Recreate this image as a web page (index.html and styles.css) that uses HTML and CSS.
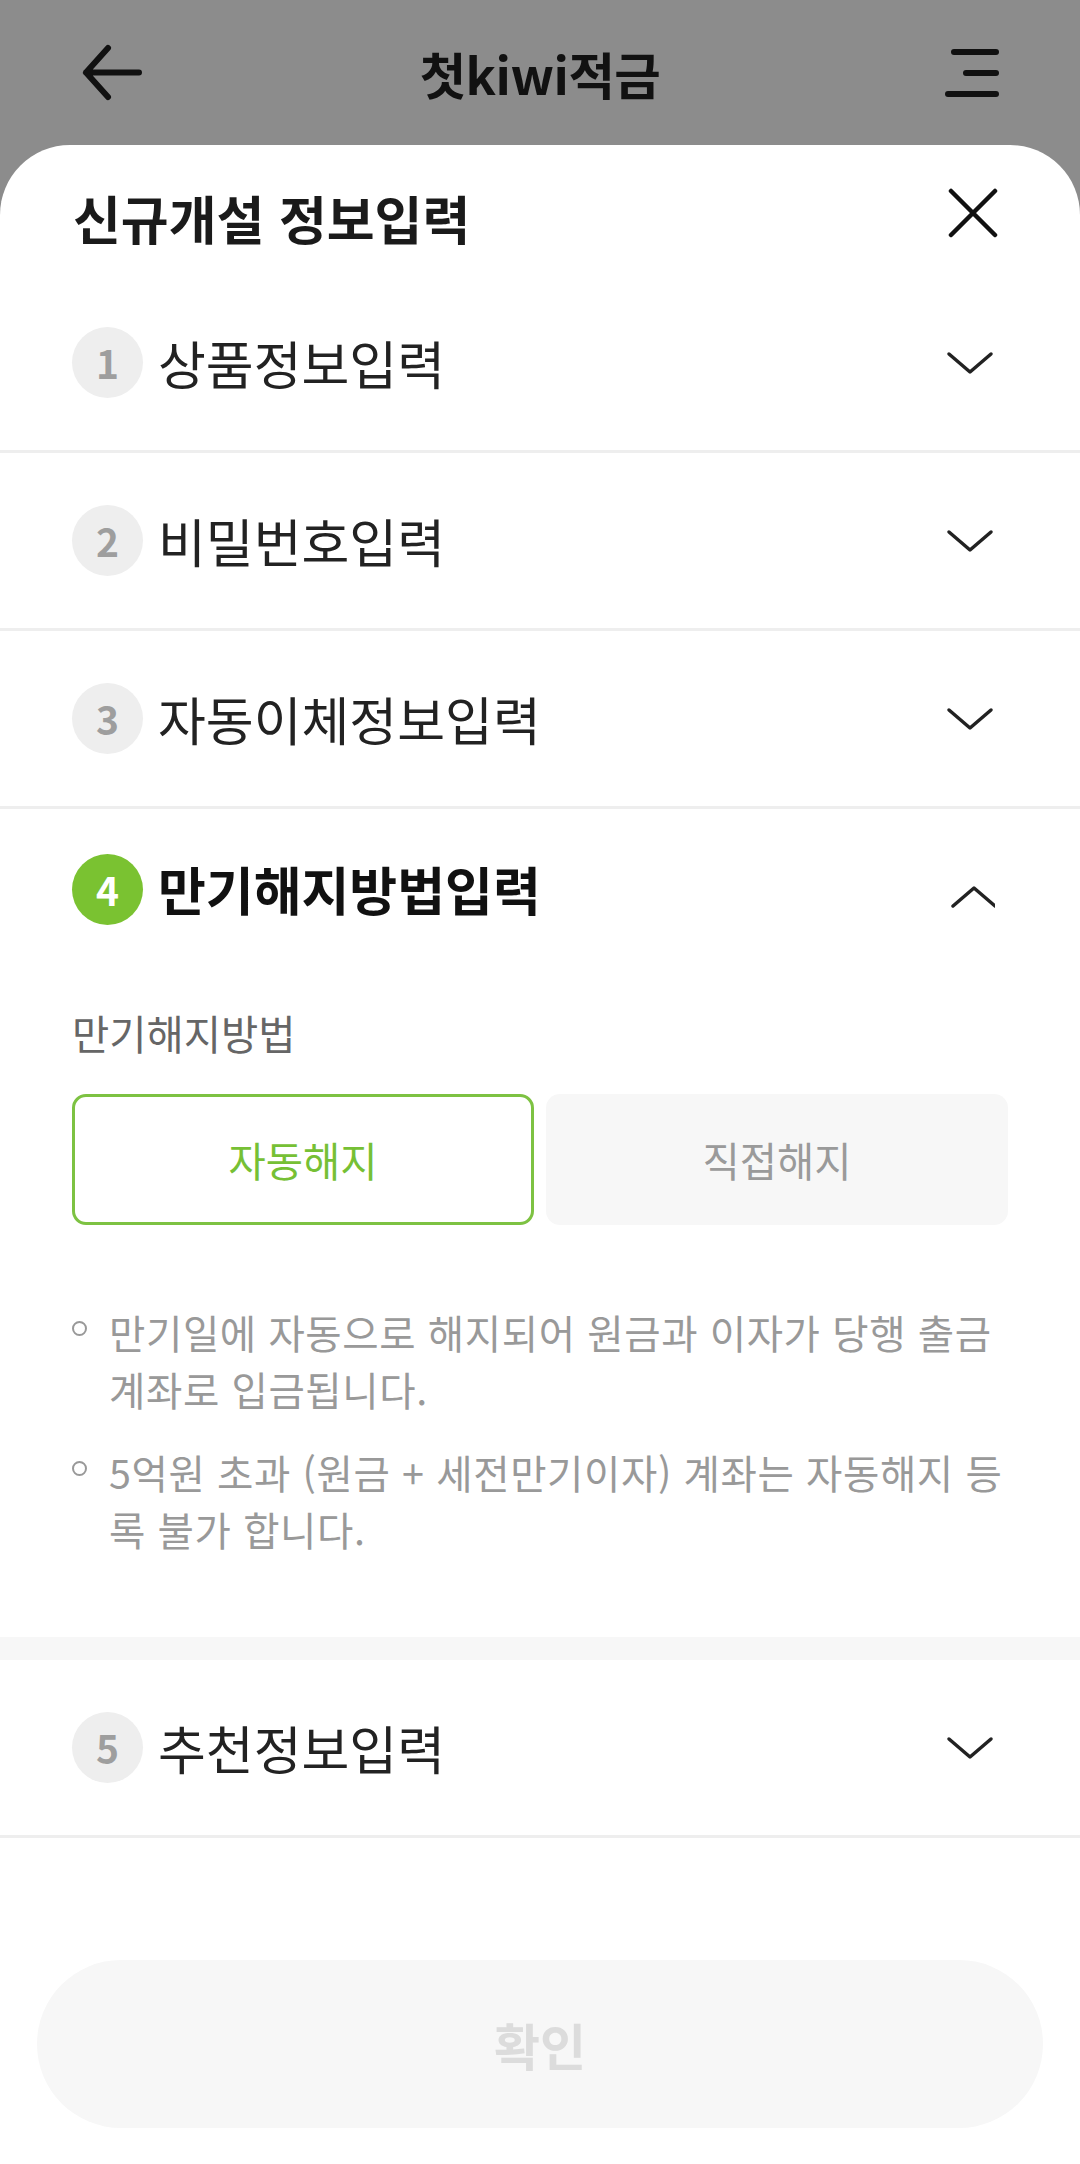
FILE: index.html
```html
<!DOCTYPE html>
<html lang="ko">
<head>
<meta charset="utf-8">
<title>첫kiwi적금</title>
<link rel="stylesheet" href="styles.css">
</head>
<body>
<header class="appbar">
  <div class="appbar-left">
    <svg class="icon-back" width="64" height="62" viewBox="0 0 64 62"><path d="M28 6 L6 30.5 L28 55 M6 30.5 L59 30.5" fill="none" stroke="#111" stroke-width="6" stroke-linecap="round" stroke-linejoin="round"/></svg>
  </div>
  <h1 class="appbar-title">첫kiwi적금</h1>
  <div class="appbar-right">
    <svg class="icon-menu" width="54" height="52" viewBox="0 0 54 52"><path d="M9 5 H51 M21 26 H51 M3 47 H51" fill="none" stroke="#111" stroke-width="6" stroke-linecap="round"/></svg>
  </div>
</header>

<main class="sheet">
  <div class="sheet-head">
    <h2 class="sheet-title">신규개설 정보입력</h2>
    <svg class="icon-close" width="50" height="50" viewBox="0 0 50 50"><path d="M3 3 L47 47 M47 3 L3 47" fill="none" stroke="#111" stroke-width="4.5" stroke-linecap="round"/></svg>
  </div>

  <section class="acc">
    <div class="acc-head">
      <span class="badge">1</span>
      <span class="acc-title">상품정보입력</span>
      <svg class="chev" width="50" height="50" viewBox="0 0 50 50"><path d="M4 16 L25 34 L46 16" fill="none" stroke="#222" stroke-width="3.5" stroke-linecap="round" stroke-linejoin="round"/></svg>
    </div>
  </section>

  <section class="acc">
    <div class="acc-head">
      <span class="badge">2</span>
      <span class="acc-title">비밀번호입력</span>
      <svg class="chev" width="50" height="50" viewBox="0 0 50 50"><path d="M4 16 L25 34 L46 16" fill="none" stroke="#222" stroke-width="3.5" stroke-linecap="round" stroke-linejoin="round"/></svg>
    </div>
  </section>

  <section class="acc">
    <div class="acc-head">
      <span class="badge">3</span>
      <span class="acc-title">자동이체정보입력</span>
      <svg class="chev" width="50" height="50" viewBox="0 0 50 50"><path d="M4 16 L25 34 L46 16" fill="none" stroke="#222" stroke-width="3.5" stroke-linecap="round" stroke-linejoin="round"/></svg>
    </div>
  </section>

  <section class="acc acc-open">
    <div class="acc-head">
      <span class="badge badge-active">4</span>
      <span class="acc-title">만기해지방법입력</span>
      <svg class="chev" width="50" height="50" viewBox="0 0 50 50"><path d="M8 42 L29 24 L50 42" fill="none" stroke="#222" stroke-width="3.5" stroke-linecap="round" stroke-linejoin="round"/></svg>
    </div>
    <div class="acc-body">
      <div class="field-label">만기해지방법</div>
      <div class="seg">
        <button class="seg-btn seg-on" type="button">자동해지</button>
        <button class="seg-btn" type="button">직접해지</button>
      </div>
      <ul class="notes">
        <li>만기일에 자동으로 해지되어 원금과 이자가 당행 출금 계좌로 입금됩니다.</li>
        <li>5억원 초과 (원금 + 세전만기이자) 계좌는 자동해지 등록 불가 합니다.</li>
      </ul>
    </div>
  </section>
  <div class="band"></div>

  <section class="acc">
    <div class="acc-head">
      <span class="badge">5</span>
      <span class="acc-title">추천정보입력</span>
      <svg class="chev" width="50" height="50" viewBox="0 0 50 50"><path d="M4 16 L25 34 L46 16" fill="none" stroke="#222" stroke-width="3.5" stroke-linecap="round" stroke-linejoin="round"/></svg>
    </div>
  </section>

  <div class="footer">
    <button class="confirm" type="button">확인</button>
  </div>
</main>
</body>
</html>
```

FILE: styles.css
```css
* { box-sizing: border-box; }
html, body {
  margin: 0;
  padding: 0;
}
body {
  width: 1080px;
  min-height: 2164px;
  background: #8c8c8c;
  font-family: "Noto Sans CJK KR", "Noto Sans", sans-serif;
  color: #222;
}

.appbar {
  height: 145px;
  display: grid;
  grid-template-columns: 1fr auto 1fr;
  align-items: center;
  background: #8c8c8c;
}
.appbar-left { padding-left: 80px; display: flex; }
.appbar-right { padding-right: 81px; display: flex; justify-content: flex-end; }
.icon-back, .icon-menu { display: block; }
.appbar-title {
  margin: 0;
  font-size: 50.5px;
  font-weight: 700;
  line-height: 66px;
  color: #111;
  letter-spacing: -0.5px;
}

.sheet {
  background: #fff;
  border-radius: 70px 70px 0 0;
  min-height: 2019px;
  display: flex;
  flex-direction: column;
}

.sheet-head {
  display: flex;
  align-items: center;
  justify-content: space-between;
  padding: 40px 82px 24px 73px;
}
.sheet-title {
  margin: 0;
  font-size: 52px;
  font-weight: 700;
  line-height: 66px;
  color: #1a1a1a;
}
.icon-close { display: block; margin-bottom: 10px; }

.acc {
  border-bottom: 3px solid #eeeeee;
}
.acc-open { border-bottom: none; }

.acc-head {
  height: 175px;
  display: flex;
  align-items: center;
  padding: 0 85px 0 72px;
}
.acc-open .acc-head { height: 160px; }

.badge {
  width: 71px;
  height: 71px;
  border-radius: 50%;
  background: #eeeeee;
  color: #9e9e9e;
  font-size: 39px;
  font-weight: 700;
  display: flex;
  align-items: center;
  justify-content: center;
  flex-shrink: 0;
  margin-right: 15px;
  line-height: 1;
}
.badge-active {
  background: #7ac231;
  color: #fff;
}

.acc-title {
  flex: 1;
  font-size: 52px;
  font-weight: 400;
  line-height: 66px;
  color: #222;
}
.acc-open .acc-title {
  font-weight: 700;
  color: #111;
}
.chev { display: block; flex-shrink: 0; }

.acc-body {
  padding: 0 72px 80px 72px;
}
.field-label {
  margin-top: 39px;
  font-size: 40.5px;
  line-height: 50px;
  color: #666;
}
.seg {
  margin-top: 36px;
  display: grid;
  grid-template-columns: 1fr 1fr;
  gap: 12px;
  height: 131px;
}
.seg-btn {
  border: none;
  border-radius: 14px;
  background: #f7f7f7;
  color: #9a9a9a;
  font-family: "Noto Sans CJK KR", "Noto Sans", sans-serif;
  font-size: 40.5px;
  font-weight: 400;
  padding: 0;
}
.seg-on {
  background: #fff;
  border: 3px solid #7dc242;
  color: #76c035;
}

.notes {
  list-style: none;
  margin: 78px 0 0 0;
  padding: 0;
}
.notes li {
  display: flex;
  font-size: 39.5px;
  line-height: 57px;
  letter-spacing: 0.6px;
  color: #999;
}
.notes li + li { margin-top: 26px; }
.notes li::before {
  content: "";
  flex-shrink: 0;
  width: 11px;
  height: 11px;
  border: 2px solid #999;
  border-radius: 50%;
  margin-top: 18px;
  margin-right: 22px;
}

.band {
  height: 23px;
  background: #f7f7f7;
}

.footer {
  margin-top: auto;
  padding: 0 37px 36px 37px;
}
.confirm {
  display: block;
  width: 100%;
  height: 168px;
  border: none;
  border-radius: 84px;
  background: #f7f7f7;
  color: #dcdcdc;
  font-family: "Noto Sans CJK KR", "Noto Sans", sans-serif;
  font-size: 50px;
  font-weight: 700;
  padding: 0;
}
```
